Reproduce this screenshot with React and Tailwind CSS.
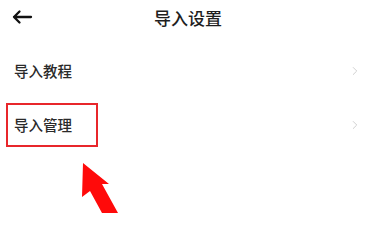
import { ChevronRight } from "lucide-react";

const FONT = { fontFamily: '"Noto Sans CJK SC", "Noto Sans", sans-serif' };

function Row({ label, boxed }) {
  return (
    <div className="flex h-[54px] items-center justify-between pl-[6px] pr-[3px]">
      {boxed ? (
        <div className="flex h-[44px] w-[92px] items-center border-2 border-[#e8262b] pl-[6px] text-[14.5px] font-medium text-[#2a2a2a]">
          导入管理
        </div>
      ) : (
        <div className="pl-[8px] text-[14.5px] font-medium text-[#2a2a2a]">{label}</div>
      )}
      <ChevronRight className="h-[14px] w-[14px] text-[#c9c9c9]" strokeWidth={1.5} />
    </div>
  );
}

export default function App() {
  return (
    <div className="relative h-[213px] w-[365px] overflow-hidden bg-white" style={FONT}>
      {/* Header */}
      <div className="relative flex h-[36px] items-center justify-center pl-[11px]">
        <svg className="absolute left-[11px] top-[9px]" width="22" height="16" viewBox="0 0 22 16">
          <path d="M3 8 H20 M8.5 2.5 L3 8 L8.5 13.5" fill="none" stroke="#111" strokeWidth="2.3" strokeLinecap="round" strokeLinejoin="round" />
        </svg>
        <span className="text-[17px] font-medium text-[#1e1e1e]">导入设置</span>
      </div>

      {/* List */}
      <div className="mt-[8px]">
        <Row label="导入教程" />
        <Row boxed />
      </div>

      {/* Annotation arrow */}
      <svg className="absolute left-0 top-0" width="365" height="213" viewBox="0 0 365 213">
        <polygon points="83,163 109,184 102,184 118,213 102,213 90,191 82,197" fill="#ff0a0a" />
      </svg>
    </div>
  );
}
